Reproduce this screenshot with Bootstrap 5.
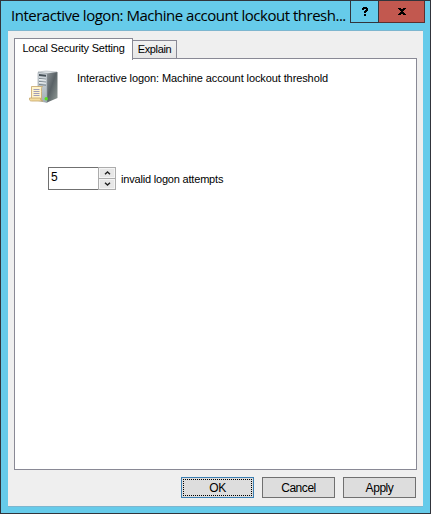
<!DOCTYPE html>
<html lang="en">
<head>
<meta charset="utf-8">
<meta name="viewport" content="width=device-width, initial-scale=1">
<title>Interactive logon: Machine account lockout threshold</title>
<link href="https://cdn.jsdelivr.net/npm/bootstrap@5.3.0/dist/css/bootstrap.min.css" rel="stylesheet">
<style>
body{font:11px/15px "Liberation Sans",Arial,sans-serif;color:#000;overflow:hidden}
svg{display:block;flex:none}
.win{width:431px;height:514px;background:#66cbea;border:1px solid #31343b;padding:0 7px 6px}
.titlebar{height:29px;padding-left:3px;margin-right:-2px}
.title-text{font:15px/29px "Open Sans","Noto Sans",sans-serif;width:339px;flex:none;letter-spacing:-.49px;white-space:nowrap}
.cap{height:22px;border:1px solid #31343b;border-top:0;flex:none}
.cap-help{width:29px}
.cap-close{width:46px;border-left:0;background:#c2584f;border-color:#5b302f}
.client{height:477px;background:#efefef;border-top:1px solid #7db6cf;border-bottom:1px solid #7db6cf;padding:7px 6px 0}
.tabs{height:20px;position:relative;z-index:1}
.tab-btn{border:1px solid #898995;border-bottom:0;background:#efefef;border-radius:0;padding:0;color:#000;font:inherit;white-space:nowrap}
.tab-on{width:119px;height:22px;background:#fff;padding-top:2px;letter-spacing:-.19px}
.tab-off{width:44px;height:18px;margin-top:2px;border-left:0;padding-top:1px;letter-spacing:-.35px;background:linear-gradient(#f1f1f1,#e6e6e6)}
.panel{width:403px;height:412px;border:1px solid #898995;background:#fff;padding:11px 14px}
.heading{padding:1px 0 0 16px;letter-spacing:-.1px;white-space:nowrap}
.policy{margin-top:63px;padding-left:19px}
.spin{width:68px;height:23px;border:1px solid #707070;background:#fff}
.spin input{width:49px;border:0;padding:0 0 3px 2px;font:12px/16px "Liberation Sans",Arial,sans-serif;outline:0;color:#000}
.spin-col{width:18px;height:23px;margin:-1px -1px 0 0;background:#acacac;padding:1px;gap:1px}
.spin-col button{height:10px;border:1px solid #f5f5f5;background:#e7e7e7;padding:0}
.attempts{margin-left:5px;padding-top:1px;letter-spacing:-.19px;white-space:nowrap}
.actions{padding:7px 1px 0 0;gap:8px}
.actions .btn{width:73px;height:21px;border:1px solid #707070;border-radius:0;background:#ddd;padding:1px 0 0;font:12px/19px "Liberation Sans",Arial,sans-serif;color:#000;letter-spacing:-.45px}
.actions .ok{border-color:#3c7fb1;padding:1px}
.ok span{display:block;height:17px;line-height:17px;border:1px dotted #000}
</style>
</head>
<body>
<main class="win">
  <header class="titlebar d-flex">
    <div class="title-text">Interactive logon: Machine account lockout thresh...</div>
    <button class="cap cap-help p-0 bg-transparent d-flex justify-content-center" aria-label="Help" type="button">
      <svg class="mt-1" width="8" height="13" viewBox="0 0 8 13" shape-rendering="crispEdges"><path d="M2 2h4v1h1v3H6v1H5v1H3V6h1V5h1V4H3v1H1V3h1zM3 9h2v2H3z"/></svg>
    </button>
    <button class="cap cap-close p-0 d-flex justify-content-center" aria-label="Close" type="button">
      <svg class="mt-1" width="10" height="12" viewBox="0 0 10 12" shape-rendering="crispEdges"><path d="M1 3h3v1h2V3h3v1H8v1H7v1H6v1h1v1h1v1h1v1H6V9H4v1H1V9h1V8h1V7h1V6H3V5H2V4H1z"/></svg>
    </button>
  </header>
  <section class="client">
    <nav class="tabs d-flex">
      <button class="tab-btn tab-on d-flex justify-content-center" type="button">Local Security Setting</button>
      <button class="tab-btn tab-off d-flex justify-content-center" type="button">Explain</button>
    </nav>
    <div class="panel">
      <div class="d-flex">
        <svg width="32" height="34" viewBox="0 0 32 34">
          <defs>
            <linearGradient id="side" x2="1" y2="1"><stop stop-color="#8b9296"/><stop offset=".45" stop-color="#596266"/><stop offset="1" stop-color="#929c97"/></linearGradient>
            <linearGradient id="face" y2="1" x2="0"><stop stop-color="#d6dce0"/><stop offset="1" stop-color="#a1adb4"/></linearGradient>
          </defs>
          <path d="M9 2L17 1l11 1-10 2z" fill="#dfe4e6" stroke="#aeb6ba" stroke-width=".6"/>
          <path d="M18 3.5l10.500-1.500v26l-10.500 4.500z" fill="url(#side)"/>
          <path d="M9 2.500l9 1v29l-9-2z" fill="url(#face)" stroke="#8e999f" stroke-width=".6"/>
          <path d="M10 4l7 .8v2l-7-.8z" fill="#465158"/>
          <path d="M10 8.500l7 .7M10 11.500l7 .7M10 14.500l7 .7" stroke="#78848b"/>
          <path d="M10 9.500l7 .7M10 12.500l7 .7" stroke="#f2f5f6"/>
          <circle cx="17.200" cy="28.700" r="1.700" fill="#58e221"/>
          <path d="M2.500 16.500h11c-1.500 1-1 3-1 5v8h-10z" fill="#fff4cb" stroke="#c5a568" stroke-width=".8"/>
          <path d="M.5 28h11c-.5 2 1 3 2.500 3H2.500C1 31 0 30 .5 28z" fill="#f4dda0" stroke="#c5a568" stroke-width=".8"/>
          <path d="M4.500 19.500h6M4.500 21.500h6M4.500 23.500h6M4.500 25.500h6" stroke="#9694b5" stroke-width=".9"/>
        </svg>
        <div class="heading">Interactive logon: Machine account lockout threshold</div>
      </div>
      <div class="policy d-flex align-items-center">
        <div class="spin d-flex">
          <input type="text" value="5" aria-label="Invalid logon attempts">
          <div class="spin-col d-flex flex-column">
            <button type="button" class="d-flex align-items-center justify-content-center" aria-label="Increase"><svg width="7" height="4" viewBox="0 0 7 4"><path d="M1 3.3L3.5 1 6 3.3" fill="none" stroke="#222" stroke-width="1.4"/></svg></button>
            <button type="button" class="d-flex align-items-center justify-content-center" aria-label="Decrease"><svg width="7" height="4" viewBox="0 0 7 4"><path d="M1 .7L3.5 3 6 .7" fill="none" stroke="#222" stroke-width="1.4"/></svg></button>
          </div>
        </div>
        <div class="attempts">invalid logon attempts</div>
      </div>
    </div>
    <footer class="actions d-flex justify-content-end">
      <button class="btn ok" type="button"><span>OK</span></button>
      <button class="btn" type="button">Cancel</button>
      <button class="btn" type="button">Apply</button>
    </footer>
  </section>
</main>
<script src="https://cdn.jsdelivr.net/npm/bootstrap@5.3.0/dist/js/bootstrap.bundle.min.js"></script>
</body>
</html>
